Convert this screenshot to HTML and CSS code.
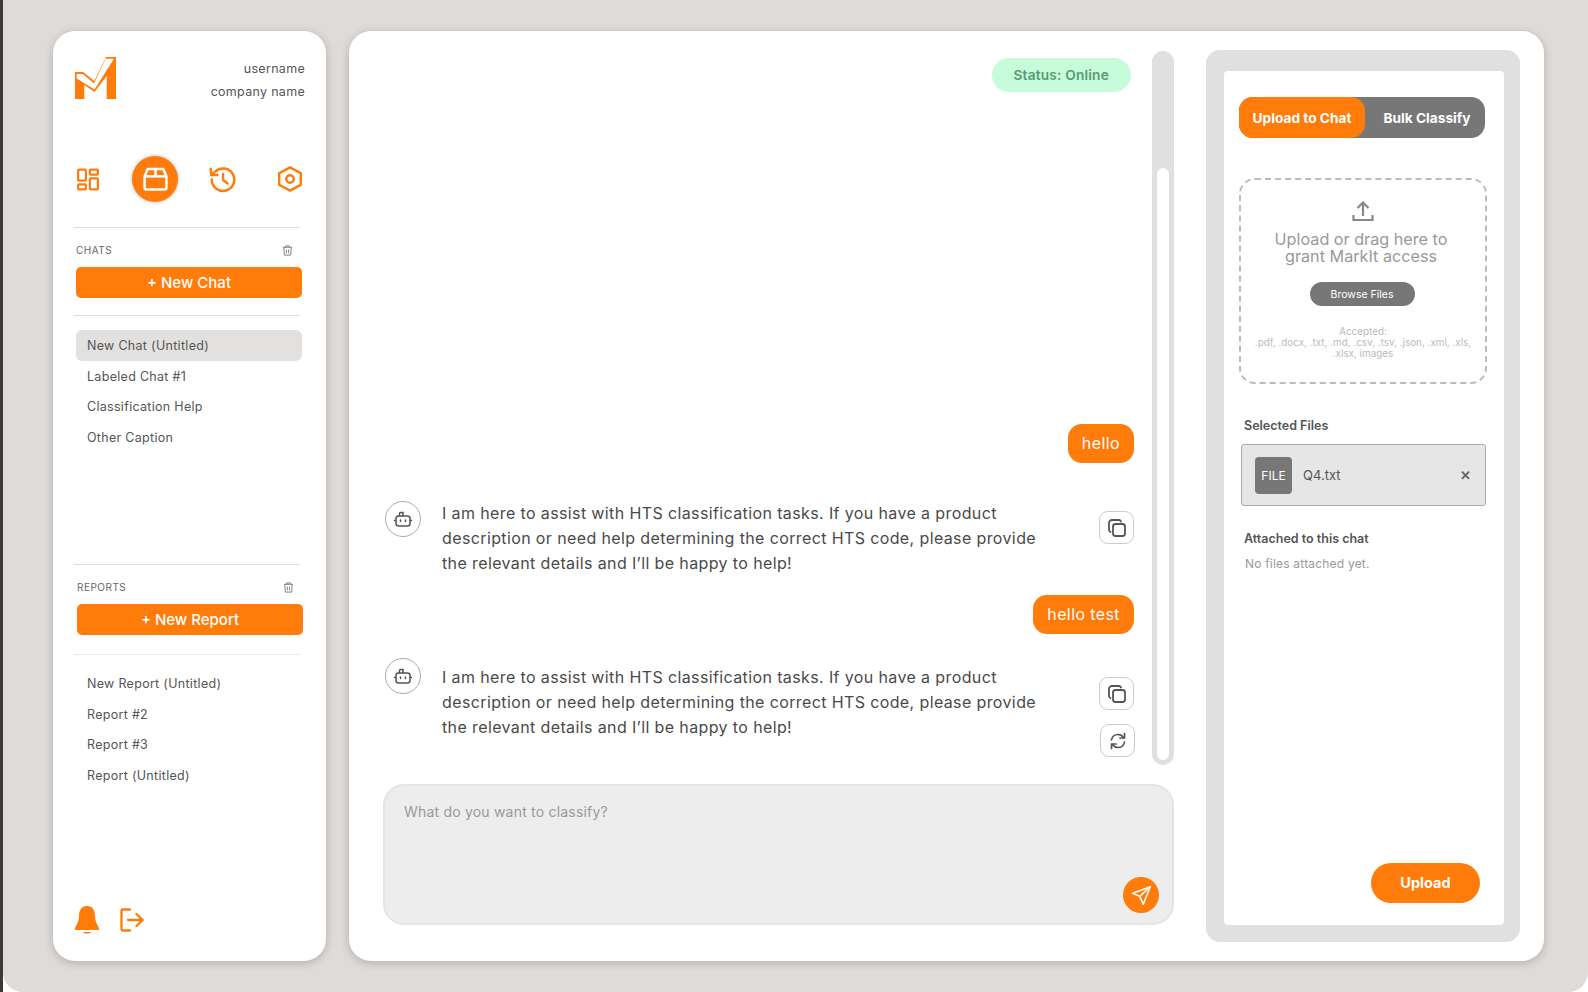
FILE: index.html
```html
<!DOCTYPE html>
<html lang="en">
<head>
<meta charset="utf-8">
<title>MarkIt</title>
<link rel="stylesheet" href="styles.css">
</head>
<body>
<div class="frame">
  <aside class="sidebar">
    <header class="brand">
      <svg class="logo" viewBox="0 0 41 42"><path fill="#ff7b0a" d="M0 15 L8.300 15 L19.300 24 L31 0 L41 0 L41 42 L31.700 42 L31.700 19 L19.500 35 L9.300 28 L9.300 42 L0 42 Z"/><path fill="#fff" d="M1.700 17 L8 17 L19 26.500 L30.500 1.700 L39 1.700 L19.500 32.500 L1.700 21.500 Z"/></svg>
      <div class="account"><div>username</div><div>company name</div></div>
    </header>
    <nav class="nav">
      <svg class="nav-icon icon-grid" viewBox="0 0 24 24"><g fill="none" stroke="#ff7b0a" stroke-width="2.400"><rect x="1.200" y="1.200" width="8.500" height="12" rx="1"/><rect x="14" y="1.200" width="8.800" height="5.500" rx="1"/><rect x="1.200" y="17.300" width="8.500" height="5.500" rx="1"/><rect x="14" y="10.800" width="8.800" height="12" rx="1"/></g></svg>
      <span class="nav-active"><svg viewBox="0 0 24 24" width="25" height="25"><g fill="none" stroke="#fff" stroke-width="2.400" stroke-linejoin="round"><path d="M1.500 9 L4.500 2 H19.500 L22.500 9 V20 a1.500 1.500 0 0 1-1.500 1.500 H3 a1.500 1.500 0 0 1-1.500-1.500 Z"/><path d="M1.500 9 H22.500"/><path d="M12 2 V9"/></g></svg></span>
      <svg class="nav-icon icon-history" viewBox="0 0 24 24"><g fill="none" stroke="#ff7b0a" stroke-width="2.200" stroke-linecap="round" stroke-linejoin="round"><path d="M2.500 12 a10 10 0 1 0 3-7 L2 8"/><path d="M1.500 2.500 L2 8 L7.500 8"/><path d="M12.500 7 V12.500 L16.500 15.500"/></g></svg>
      <svg class="nav-icon icon-hex" viewBox="0 0 24 26"><g fill="none" stroke="#ff7b0a" stroke-width="2.400"><path d="M12 1.400 L22.800 7.200 V18.800 L12 24.600 L1.200 18.800 V7.200 Z"/><circle cx="12" cy="13" r="3.800"/></g></svg>
    </nav>
    <hr class="rule rule-first">
    <section class="group">
      <div class="group-head"><span>CHATS</span><svg class="trash" viewBox="0 0 12 12"><use href="#trash"/></svg></div>
      <button class="primary">+ New Chat</button>
    </section>
    <hr class="rule rule-chats">
    <ul class="list list-chats">
      <li class="selected">New Chat (Untitled)</li>
      <li>Labeled Chat #1</li>
      <li>Classification Help</li>
      <li>Other Caption</li>
    </ul>
    <hr class="rule">
    <section class="group group-reports">
      <div class="group-head"><span>REPORTS</span><svg class="trash" viewBox="0 0 12 12"><use href="#trash"/></svg></div>
      <button class="primary">+ New Report</button>
    </section>
    <hr class="rule rule-light">
    <ul class="list list-reports">
      <li>New Report (Untitled)</li>
      <li>Report #2</li>
      <li>Report #3</li>
      <li>Report (Untitled)</li>
    </ul>
    <footer class="side-foot">
      <svg width="26" height="28" viewBox="0 0 26 28"><path fill="#ff7b0a" d="M13 0 C7 0 5 5 5 10 C5 15 3 18 1 22 C0.500 23 1 24 2 24 H24 C25 24 25.500 23 25 22 C23 18 21 15 21 10 C21 5 19 0 13 0 Z M9 26 H17 C16 28 10 28 9 26 Z"/></svg>
      <svg width="24" height="24" viewBox="0 0 24 24"><g fill="none" stroke="#ff7b0a" stroke-width="2.300" stroke-linecap="round" stroke-linejoin="round"><path d="M10 1.500 H2.500 a1 1 0 0 0-1 1 V21.500 a1 1 0 0 0 1 1 H10"/><path d="M8 12 H22.500"/><path d="M16.500 6 L22.500 12 L16.500 18"/></g></svg>
    </footer>
  </aside>

  <main class="main">
    <section class="chat">
      <div class="chat-top">
        <div class="messages">
          <div class="status">Status: Online</div>
          <div class="bubble bubble-1">hello</div>
          <div class="reply reply-1">
            <span class="bot"><svg viewBox="0 0 20 20" width="20" height="20"><use href="#bot"/></svg></span>
            <p>I am here to assist with HTS classification tasks. If you have a product description or need help determining the correct HTS code, please provide the relevant details and I’ll be happy to help!</p>
            <div class="tools"><button class="tool"><svg viewBox="0 0 20 20" width="20" height="20"><use href="#copy"/></svg></button></div>
          </div>
          <div class="bubble">hello test</div>
          <div class="reply reply-2">
            <span class="bot"><svg viewBox="0 0 20 20" width="20" height="20"><use href="#bot"/></svg></span>
            <p>I am here to assist with HTS classification tasks. If you have a product description or need help determining the correct HTS code, please provide the relevant details and I’ll be happy to help!</p>
            <div class="tools tools-2">
              <button class="tool"><svg viewBox="0 0 20 20" width="20" height="20"><use href="#copy"/></svg></button>
              <button class="tool tool-refresh"><svg viewBox="0 0 20 20" width="20" height="20"><g fill="none" stroke="#555" stroke-width="1.700" stroke-linecap="round" stroke-linejoin="round"><path d="M3.500 9 C4 5.500 7 3.500 10 3.500 C12.500 3.500 14.500 5 15.500 6.500"/><path d="M16.500 2.500 V7 H12"/><path d="M16.500 11 C16 14.500 13 16.500 10 16.500 C7.500 16.500 5.500 15 4.500 13.500"/><path d="M3.500 17.500 V13 H8"/></g></svg></button>
            </div>
          </div>
        </div>
        <div class="scroll-track"><div class="scroll-thumb"></div></div>
      </div>
      <div class="composer">
        <div class="placeholder">What do you want to classify?</div>
        <button class="send"><svg viewBox="0 0 24 24" width="21" height="21"><g fill="none" stroke="#fff" stroke-width="1.800" stroke-linejoin="round" stroke-linecap="round"><path d="M22 2 L2 9.500 L10 13 L14 22 Z"/><path d="M22 2 L10 13"/></g></svg></button>
      </div>
    </section>

    <aside class="panel">
      <div class="panel-inner">
        <div class="tabs"><span class="tab tab-on">Upload to Chat</span><span class="tab">Bulk Classify</span></div>
        <div class="drop">
          <svg class="upload-icon" viewBox="0 0 22 22" width="22" height="22"><g fill="none" stroke="#888" stroke-width="2.200"><path d="M1.500 15 V20 H20.500 V15"/><path d="M11 16 V3"/><path d="M5.500 8 L11 2.500 L16.500 8"/></g></svg>
          <div class="drop-title">Upload or drag here to<br>grant MarkIt access</div>
          <button class="browse">Browse Files</button>
          <div class="accepted">Accepted:<br>.pdf, .docx, .txt, .md, .csv, .tsv, .json, .xml, .xls,<br>.xlsx, images</div>
        </div>
        <h3 class="label label-selected">Selected Files</h3>
        <div class="file"><span class="file-badge">FILE</span><span class="file-name">Q4.txt</span><span class="file-x">✕</span></div>
        <h3 class="label label-attached">Attached to this chat</h3>
        <div class="none">No files attached yet.</div>
        <button class="upload">Upload</button>
      </div>
    </aside>
  </main>
</div>
<svg class="defs" width="0" height="0">
  <defs>
    <g id="trash" fill="none" stroke="#777" stroke-width="1"><path d="M1 2.500 H11"/><path d="M4 2.500 V1 H8 V2.500"/><path d="M2 2.500 L2.500 11 H9.500 L10 2.500"/><path d="M4.800 5 V9 M7.200 5 V9"/></g>
    <g id="copy" fill="none" stroke="#555" stroke-width="1.800" stroke-linejoin="round" stroke-linecap="round"><rect x="6" y="6" width="12" height="12" rx="2.500"/><path d="M14 3.500 C13.500 2.500 12.800 2 12 2 H5 C3.200 2 2 3.200 2 5 V12 C2 12.800 2.500 13.500 3.500 14"/></g>
    <g id="bot" fill="none" stroke="#555" stroke-width="1.500" stroke-linecap="round"><rect x="3" y="7" width="14" height="10" rx="2.500"/><path d="M6.500 7 V4.500 a1 1 0 0 1 1-1 H10 V7"/><path d="M1.500 11.500 H3 M17 11.500 H18.500"/><path d="M7.500 11 V12.500 M12.500 11 V12.500"/></g>
  </defs>
</svg>
</body>
</html>
```
FILE: styles.css
```css
* { box-sizing: border-box; }
html, body { margin: 0; height: 100%; }
body {
  width: 1588px;
  height: 992px;
  overflow: hidden;
  background: #fff;
  border-left: 3px solid #3a3a3a;
  font-family: Inter, "Liberation Sans", sans-serif;
  color: #555;
}
.defs { display: block; height: 0; }
button { font-family: inherit; border: 0; padding: 0; cursor: pointer; }
.frame {
  display: flex;
  gap: 23px;
  height: 992px;
  padding: 31px 44px 31px 50px;
  background: #dedbd8;
  border-radius: 0 0 20px 20px;
}
.sidebar {
  flex: 0 0 273px;
  display: flex;
  flex-direction: column;
  background: #fff;
  border-radius: 22px;
  box-shadow: 0 2px 10px rgba(0,0,0,.2);
  padding: 26px 21px 0 21px;
}
.brand { display: flex; justify-content: space-between; height: 43px; }
.logo { width: 41px; height: 42px; display: block; margin-left: 1px; }
.account { text-align: right; font-size: 12.500px; line-height: 22.500px; letter-spacing: .3px; padding-top: 1px; }
.nav {
  display: flex;
  align-items: center;
  margin-top: 56px;
  height: 46px;
  padding-left: 3px;
}
.nav-icon { display: block; flex: none; }
.icon-grid { width: 22px; height: 23px; }
.icon-history { width: 27px; height: 27px; margin-left: 31px; }
.icon-hex { width: 24px; height: 26px; margin-left: 42px; }
.nav-active {
  flex: none;
  width: 46px;
  height: 46px;
  border-radius: 50%;
  background: #ff7b0a;
  box-shadow: 0 0 4px rgba(0,0,0,.25);
  display: flex;
  align-items: center;
  justify-content: center;
  margin-left: 33px;
}
.rule { border: 0; height: 1px; background: #ddd; margin: 0; width: 226px; flex: none; }
.rule-first { margin-top: 25px; }
.rule-chats { margin-top: 17px; }
.rule-light { margin-top: 19px; background: #eaeaea; }
.group { width: 226px; margin-left: 2px; flex: none; }
.group-reports { margin-left: 3px; }
.group-head {
  display: flex;
  justify-content: space-between;
  align-items: center;
  padding: 5px 9px 0 0;
  height: 39px;
  font-size: 10px;
  letter-spacing: .5px;
  color: #666;
}
.trash { width: 11px; height: 11px; display: block; }
.primary {
  display: block;
  width: 100%;
  height: 31px;
  background: #ff7b0a;
  color: #fff;
  font-size: 15px;
  font-weight: 500;
  border-radius: 5px;
}
.list { list-style: none; margin: 0; padding: 0; font-size: 12.500px; letter-spacing: .3px; }
.list li { height: 30.500px; line-height: 32px; padding-left: 11px; margin-left: 2px; width: 226px; }
.list-chats { margin-top: 14px; height: 234px; flex: none; }
.list-reports { margin-top: 13px; }
.selected { background: #e2e1df; border-radius: 6px; }
.side-foot {
  margin-top: auto;
  margin-bottom: 27px;
  display: flex;
  align-items: center;
  gap: 20px;
}
.main {
  flex: 1;
  min-width: 0;
  display: flex;
  background: #fff;
  border-radius: 22px;
  box-shadow: 0 2px 10px rgba(0,0,0,.2);
  padding: 19px 24px 19px 33px;
  gap: 32px;
}
.chat { flex: 0 0 792px; min-width: 0; display: flex; flex-direction: column; padding-top: 1px; }
.chat-top { display: flex; height: 714px; gap: 18px; padding-left: 2px; }
.messages { flex: 0 0 750px; display: flex; flex-direction: column; align-items: flex-end; padding-top: 7px; }
.status {
  background: #c6fcd9;
  color: #5a9a75;
  font-size: 13.700px;
  font-weight: 600;
  letter-spacing: .2px;
  height: 34px;
  line-height: 34px;
  padding: 0 22px 0 21px;
  border-radius: 17px;
  margin-right: 3px;
}
.bubble {
  background: #ff7b0a;
  color: #fff;
  font-size: 16px;
  letter-spacing: .4px;
  height: 39px;
  line-height: 39px;
  padding: 0 14px;
  border-radius: 14px;
  flex: none;
}
.bubble-1 { margin-top: 332px; }
.reply { display: flex; width: 100%; align-items: flex-start; flex: none; }
.reply-1 { margin-top: 38px; height: 94px; }
.reply-2 { margin-top: 31px; height: 92px; }
.bot {
  flex: 0 0 36px;
  height: 36px;
  border: 1px solid #aaa;
  border-radius: 50%;
  display: flex;
  align-items: center;
  justify-content: center;
  margin: 0 21px 0 1px;
}
.reply-2 .bot { margin-top: -7px; }
.reply p {
  margin: 0;
  flex: 0 0 620px;
  font-size: 16px;
  line-height: 24.800px;
  letter-spacing: .38px;
  color: #4a4a4a;
}
.tools { margin-left: auto; padding-top: 10px; display: flex; flex-direction: column; align-items: flex-end; }
.tools-2 { gap: 14px; padding-top: 12px; }
.tool {
  width: 35px;
  height: 33px;
  border: 1px solid #ccc;
  border-radius: 9px;
  background: #fff;
  display: flex;
  align-items: center;
  justify-content: center;
}
.tool-refresh { margin-right: -1px; }
.scroll-track {
  flex: 0 0 22px;
  height: 714px;
  background: #e0e0e0;
  border-radius: 11px;
  padding: 117px 5px 5px;
}
.scroll-thumb { height: 100%; background: #fff; border-radius: 6px; }
.composer {
  margin: 19px 0 0 1px;
  height: 141px;
  background: #ededed;
  border: 2px solid #e4e4e4;
  border-radius: 21px;
  padding: 17px 13px 10px 19px;
  display: flex;
  flex-direction: column;
  justify-content: space-between;
}
.placeholder { font-size: 14px; letter-spacing: .2px; color: #999; line-height: 18px; }
.send {
  align-self: flex-end;
  width: 36px;
  height: 36px;
  border-radius: 50%;
  background: #ff7b0a;
  display: flex;
  align-items: center;
  justify-content: center;
}
.panel {
  flex: 0 0 314px;
  height: 892px;
  background: #e0e0e0;
  border-radius: 14px;
  padding: 21px 16px 17px 18px;
}
.panel-inner {
  height: 100%;
  background: #fff;
  border-radius: 4px;
  padding: 26px 17px 0 15px;
  display: flex;
  flex-direction: column;
}
.tabs { display: flex; width: 246px; height: 41px; flex: none; background: #777; border-radius: 14px; color: #fff; font-size: 13.700px; font-weight: 700; }
.tab { display: flex; align-items: center; justify-content: center; flex: 1; padding-left: 4px; }
.tab-on { flex: 0 0 126px; background: #ff7b0a; border-radius: 14px; padding-left: 0; }
.drop {
  margin-top: 40px;
  width: 248px;
  height: 206px;
  flex: none;
  border: 2px dashed #bbb;
  border-radius: 16px;
  display: flex;
  flex-direction: column;
  align-items: center;
  padding-top: 20px;
}
.upload-icon { flex: none; }
.drop-title { font-size: 16.200px; line-height: 17px; color: #999; text-align: center; margin-top: 8.500px; margin-left: -4px; }
.browse { margin-top: 17.500px; margin-left: -2px; width: 105px; height: 24px; flex: none; border-radius: 12px; background: #777; color: #fff; font-size: 10.500px; }
.accepted { margin-top: 20px; font-size: 9.900px; line-height: 11px; color: #bbb; text-align: center; }
.label { margin: 0; font-size: 12.500px; font-weight: 600; color: #555; line-height: 16px; padding-left: 5px; }
.label-selected { margin-top: 34px; }
.file {
  margin: 10px 0 0 2px;
  width: 245px;
  height: 62px;
  flex: none;
  background: #e6e6e6;
  border: 1px solid #aaa;
  border-radius: 3px;
  display: flex;
  align-items: center;
  padding-left: 13px;
}
.file-badge {
  width: 37px;
  height: 37px;
  background: #777;
  color: #fff;
  border-radius: 4px;
  font-size: 12px;
  display: flex;
  align-items: center;
  justify-content: center;
}
.file-name { margin-left: 11px; font-size: 13px; color: #555; flex: 1; }
.file-x { margin-right: 14px; font-size: 12.500px; font-weight: 700; color: #666; }
.label-attached { margin-top: 25px; }
.none { font-size: 12px; color: #999; margin-top: 9px; padding-left: 6px; letter-spacing: .2px; line-height: 16px; }
.upload {
  margin-top: auto;
  margin-bottom: 22px;
  align-self: flex-end;
  margin-right: 7px;
  width: 109px;
  height: 40px;
  flex: none;
  padding-bottom: 2px;
  border-radius: 20px;
  background: #ff7b0a;
  color: #fff;
  font-size: 14.500px;
  font-weight: 700;
}
```
